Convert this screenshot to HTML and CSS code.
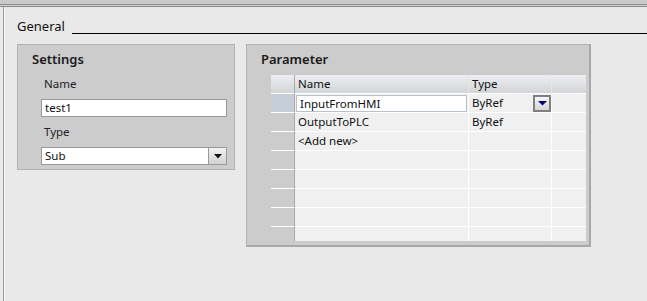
FILE: index.html
```html
<!DOCTYPE html>
<html lang="en">
<head>
  <meta charset="UTF-8" />
  <title>Block properties - General</title>
  <link rel="stylesheet" href="styles.css">
</head>
<body>
  <div class="topbar"></div>

  <div class="main">
    <div class="section-title"><span>General</span></div>

    <div class="panels">
      <div class="panel settings">
        <div class="panel-title">Settings</div>
        <div class="fields">
          <div class="field-label">Name</div>
          <div class="textbox">test1</div>
          <div class="field-label">Type</div>
          <div class="combo">
            <span class="combo-text">Sub</span>
            <span class="combo-btn">
              <svg width="8" height="5" viewBox="0 0 8 5"><path d="M0 0h8L4 4.5z" fill="#111"/></svg>
            </span>
          </div>
        </div>
      </div>

      <div class="panel parameter">
        <div class="panel-title">Parameter</div>
        <div class="grid">
          <div class="row head">
            <div class="gutter"></div>
            <div class="cell">Name</div>
            <div class="cell">Type</div>
            <div class="cell last"></div>
          </div>
          <div class="row">
            <div class="gutter selected"></div>
            <div class="cell"><div class="edit">InputFromHMI</div></div>
            <div class="cell type">
              <span>ByRef</span>
              <span class="cell-btn">
                <svg width="9" height="5" viewBox="0 0 9 5"><path d="M0 0h9L4.5 4.5z" fill="#00007f"/></svg>
              </span>
            </div>
            <div class="cell last"></div>
          </div>
          <div class="row">
            <div class="gutter"></div>
            <div class="cell">OutputToPLC</div>
            <div class="cell">ByRef</div>
            <div class="cell last"></div>
          </div>
          <div class="row">
            <div class="gutter"></div>
            <div class="cell">&lt;Add new&gt;</div>
            <div class="cell"></div>
            <div class="cell last"></div>
          </div>
          <div class="row"><div class="gutter"></div><div class="cell"></div><div class="cell"></div><div class="cell last"></div></div>
          <div class="row"><div class="gutter"></div><div class="cell"></div><div class="cell"></div><div class="cell last"></div></div>
          <div class="row"><div class="gutter"></div><div class="cell"></div><div class="cell"></div><div class="cell last"></div></div>
          <div class="row"><div class="gutter"></div><div class="cell"></div><div class="cell"></div><div class="cell last"></div></div>
          <div class="row"><div class="gutter"></div><div class="cell"></div><div class="cell"></div><div class="cell last"></div></div>
        </div>
      </div>
    </div>
  </div>
</body>
</html>
```

FILE: styles.css
```css
html, body {
  height: 100%;
}

body {
  margin: 0;
  font-family: "Noto Sans", "Open Sans", sans-serif;
  font-size: 11.5px;
  color: #111;
  background: #e9e9e9;
  display: flex;
  flex-direction: column;
  overflow: hidden;
}

.topbar {
  height: 7px;
  flex-shrink: 0;
  background: linear-gradient(#cacaca 0 4px, #8a8a8a 4px 5px, #d4d4d4 5px 6px, #8a8a8a 6px 7px);
}

.main {
  flex: 1;
  margin-left: 3px;
  border-left: 1px solid #9c9c9c;
  box-shadow: inset 1px 0 0 #f6f6f6;
  padding: 11px 0 0 13px;
}

/* section header with the rule */
.section-title {
  display: flex;
  align-items: flex-end;
  height: 16px;
  font-size: 13px;
  line-height: 16px;
}

.section-title::after {
  content: "";
  flex: 1;
  margin-left: 7px;
  border-bottom: 1px solid #000;
}

.panels {
  display: flex;
  align-items: flex-start;
  gap: 11px;
  margin-top: 10px;
}

.panel {
  background: #cccccc;
  border: 1px solid #b2b2b2;
}

.panel-title {
  font-size: 13px;
  font-weight: 600;
  line-height: 18px;
  padding: 5px 0 0 14px;
  color: #1a1a1a;
}

/* SETTINGS */
.settings {
  width: 216px;
  height: 124px;
}

.fields {
  padding: 8px 7px 0 23px;
}

.field-label {
  padding-left: 3px;
  line-height: 16px;
  color: #222;
}

.field-label + .textbox,
.field-label + .combo,
.textbox + .field-label {
  margin-top: 7px;
}

.textbox, .combo {
  height: 18px;
  box-sizing: border-box;
  border: 1px solid #9a9a9a;
  background: #fff;
  line-height: 16px;
  padding-left: 3px;
}

.combo {
  display: flex;
  padding-left: 0;
}

.combo-text {
  flex: 1;
  padding-left: 3px;
}

.combo-btn {
  width: 17px;
  border-left: 1px solid #9a9a9a;
  background: linear-gradient(#f2f2f2, #d2d2d2);
  display: flex;
  align-items: center;
  justify-content: center;
}

/* PARAMETER */
.parameter {
  width: 342px;
  height: 200px;
  border-right: 2px solid #a8a8a8;
  border-bottom: 2px solid #a8a8a8;
}

.grid {
  margin: 7px 0 0 24px;
  width: 315px;
  height: 166px;
  overflow: hidden;
}

.row {
  display: grid;
  grid-template-columns: 24px 174px 83px 34px;
  height: 19px;
}

.gutter {
  border-right: 1px solid #a9a9a9;
  border-bottom: 1px solid #fff;
}

.gutter.selected {
  background: #c5ced7;
}

.cell {
  background: #f0f0f0;
  border-right: 1px solid #fff;
  border-bottom: 1px solid #fff;
  line-height: 18px;
  padding-left: 3px;
  white-space: nowrap;
}

.cell.last {
  border-right: none;
}

.head .gutter,
.head .cell {
  background: linear-gradient(#eceef2, #d3d4d6);
}

.head .cell {
  border-right-color: #e6e6e6;
}

.edit {
  margin: 1px 1px 0 -2px;
  height: 17px;
  box-sizing: border-box;
  border: 1px solid #b8c2cd;
  background: #fff;
  line-height: 15px;
  padding-left: 3px;
}

.cell.type {
  display: flex;
  justify-content: space-between;
  padding-right: 0;
}

.cell-btn {
  width: 18px;
  height: 17px;
  margin-top: 1px;
  box-sizing: border-box;
  border: 2px solid #808080;
  background: linear-gradient(#f6f6f6, #d6d6d6);
  display: flex;
  align-items: center;
  justify-content: center;
}
```
